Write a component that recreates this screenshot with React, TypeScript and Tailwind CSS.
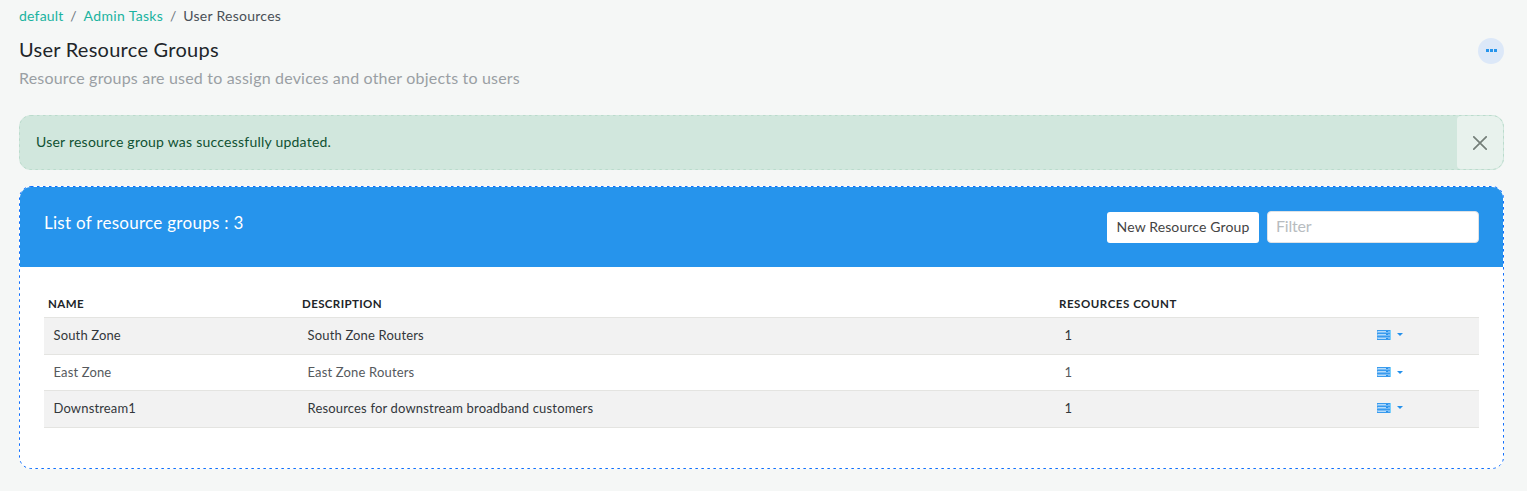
import React from "react";

type Group = { name: string; description: string; count: number };

const groups: Group[] = [
  { name: "South Zone", description: "South Zone Routers", count: 1 },
  { name: "East Zone", description: "East Zone Routers", count: 1 },
  { name: "Downstream1", description: "Resources for downstream broadband customers", count: 1 },
];

function DashedFrame({ height, color }: { height: number; color: string }) {
  return (
    <svg className="pointer-events-none absolute inset-0" width="1485" height={height} fill="none">
      <rect x=".5" y=".5" width="1484" height={height - 1} rx="11.5" stroke={color} strokeDasharray="2.5 3.5" />
    </svg>
  );
}

function ServerIcon() {
  return (
    <svg width="14" height="10" viewBox="0 0 14 10" shapeRendering="crispEdges">
      <rect width="14" height="10" fill="#78bbf5" />
      <path d="M0 0h13v1H0zM0 3h13v1H0zM0 6h13v1H0zM0 9h13v1H0z" fill="#2490eb" fillOpacity=".75" />
      <path d="M1 1h8v1H1zM1 4h8v1H1zM1 8h8v1H1z" fill="#b5dbfa" />
      <path d="M9 1h2v1H9zM9 4h2v1H9zM9 8h2v1H9z" fill="#2490eb" />
      <path d="M13 0h1v10h-1z" fill="#7bcffb" />
    </svg>
  );
}

function RowMenu() {
  return (
    <button className="flex items-center gap-[6px]">
      <ServerIcon />
      <svg width="6" height="3" viewBox="0 0 6 3">
        <path d="M0 0h6L3 3z" fill="#2490eb" />
      </svg>
    </button>
  );
}

export default function App() {
  return (
    <div className="h-[491px] overflow-hidden bg-[#f5f7f6] pl-[19px] pr-[23px] font-['Lato','Nunito',sans-serif] text-[14px] tracking-[0.2px] text-[#444]">
      <nav className="flex h-8 items-center pb-px text-[14px] leading-[21px]">
        <a className="text-[#1ab3a0]">default</a>
        <span className="w-5 text-center text-[#6c757d]">/</span>
        <a className="tracking-[0.35px] text-[#1ab3a0]">Admin Tasks</a>
        <span className="w-5 text-center text-[#6c757d]">/</span>
        <span className="tracking-[0.27px] text-[#495057]">User Resources</span>
      </nav>

      <header className="flex h-[83px] justify-between">
        <div>
          <h1 className="mt-[5px] text-[20px] leading-6 tracking-[0.26px] text-[#212529]">User Resource Groups</h1>
          <p className="mt-[5px] text-[16px] leading-6 tracking-[0.19px] text-[#9a9fa4]">
            Resource groups are used to assign devices and other objects to users
          </p>
        </div>
        <button className="mt-[6px] flex size-[26px] items-center justify-center gap-px rounded-full bg-[#dce8f8] pb-px">
          <span className="size-[3px] bg-[#2795ec]" />
          <span className="size-[3px] bg-[#2795ec]" />
          <span className="size-[3px] bg-[#2795ec]" />
        </button>
      </header>

      <div className="relative">
        <div className="flex h-[55px] items-stretch justify-between overflow-hidden rounded-[12px] border border-transparent bg-[#d1e7dd]">
          <span className="self-center pb-[2px] pl-4 tracking-[0.23px] text-[#0f5132]">User resource group was successfully updated.</span>
          <button className="flex w-[46px] items-center justify-center rounded-l-[4px] bg-[#e8f2ed]">
            <svg width="14" height="14" viewBox="0 0 14 14" fill="none" stroke="#747f79" strokeWidth="1.7" strokeLinecap="round">
              <path d="M.8.8l12.4 12.4M13.2.8L.8 13.2" />
            </svg>
          </button>
        </div>
        <DashedFrame height={55} color="#badbcc" />
      </div>

      <div className="relative mt-4">
        <section className="h-[283px] overflow-hidden rounded-[12px] border border-transparent bg-white">
          <div className="flex h-20 justify-between bg-[#2694ec] px-6 pt-6">
            <h2 className="text-[17px] leading-6 tracking-[0.28px] text-white">List of resource groups : 3</h2>
            <div className="flex gap-2">
              <button className="mt-px h-[31px] w-[152px] rounded-[3px] bg-white pb-[2px] text-[14px] tracking-[0.13px] text-[#444]">
                New Resource Group
              </button>
              <input
                placeholder="Filter"
                className="h-8 w-[212px] rounded-[4px] border border-[#dee2e6] bg-white px-2 pb-[3px] text-[16px] tracking-[-0.2px] outline-none placeholder:text-[#b8bcbf]"
              />
            </div>
          </div>

          <table className="mx-6 mt-[22px] w-[1435px] table-fixed border-collapse text-left">
            <colgroup>
              <col className="w-[254px]" />
              <col className="w-[757px]" />
              <col className="w-[313px]" />
              <col />
            </colgroup>
            <thead>
              <tr className="h-[28px] border-b border-[#e4e4e1] text-[11.5px] leading-4 text-[#212529]">
                <th className="px-1 pb-0 pt-[3px] font-bold tracking-[0.4px]">NAME</th>
                <th className="px-1 pb-0 pt-[3px] font-bold tracking-[0.4px]">DESCRIPTION</th>
                <th className="px-1 pb-0 pt-[3px] font-bold tracking-[0.54px]">RESOURCES COUNT</th>
                <th />
              </tr>
            </thead>
            <tbody className="[&>tr:nth-child(even)>td]:pb-0">
              {groups.map((g) => (
                <tr
                  key={g.name}
                  className="h-[37px] border-b border-[#e4e4e1] text-[13px] leading-5 tracking-[0.15px] text-[#33373b] odd:bg-[#f2f2f2] even:h-[36px] even:text-[#55595d]"
                >
                  <td className="px-[9.5px] pb-[2px] pt-0">{g.name}</td>
                  <td className="px-[9.5px] pb-[2px] pt-0 tracking-[0.17px]">{g.description}</td>
                  <td className="px-[9.5px] pb-[2px] pt-0">{g.count}</td>
                  <td className="px-[9px] pb-[2px] pt-0">
                    <RowMenu />
                  </td>
                </tr>
              ))}
            </tbody>
          </table>
        </section>
        <DashedFrame height={283} color="#0d6efd" />
      </div>
    </div>
  );
}
